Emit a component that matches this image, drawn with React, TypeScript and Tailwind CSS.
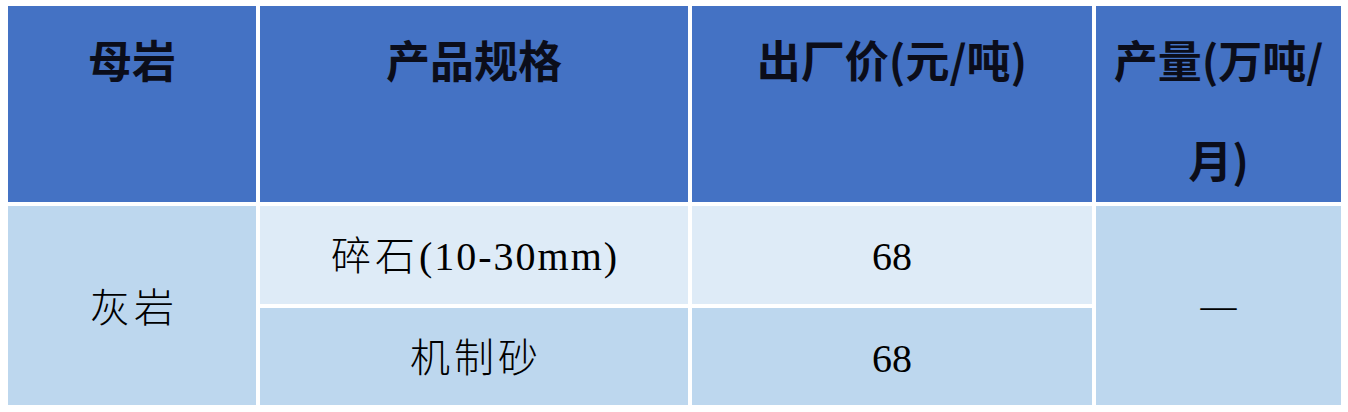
import React from 'react';

// Stone product price table: header row + two product rows
const headFont = "font-['Noto_Sans_CJK_SC','Noto_Sans',sans-serif] font-bold text-[44px] leading-[100px] text-[#0b0d1a]";
const bodyFont = "font-['Liberation_Serif','Noto_Sans_CJK_SC',serif] font-light text-[40px] text-black";

function HeadCell({ children }: { children: React.ReactNode }) {
  return (
    <div className={`bg-[#4472c4] text-center pt-[3px] ${headFont}`}>
      {children}
    </div>
  );
}

function BodyCell({ children, tone, span }: { children: React.ReactNode; tone: 'light' | 'pale'; span?: boolean }) {
  return (
    <div
      className={`flex items-center justify-center ${bodyFont} ${tone === 'pale' ? 'bg-[#deebf7]' : 'bg-[#bdd7ee]'} ${span ? 'row-span-2' : ''}`}
    >
      {children}
    </div>
  );
}

export default function App() {
  return (
    <div className="w-[1348px] h-[412px] bg-white pt-[6px] pl-[8px]">
      <div className="grid grid-cols-[248px_428px_400px_245px] grid-rows-[196px_98px_97px] gap-[4px]">
        <HeadCell>母岩</HeadCell>
        <HeadCell>产品规格</HeadCell>
        <HeadCell>出厂价(元/吨)</HeadCell>
        <HeadCell>
          产量(万吨/
          <br />
          月)
        </HeadCell>

        <BodyCell tone="light" span>
          <span className="tracking-[4px] pl-[4px] pt-[6px]">灰岩</span>
        </BodyCell>
        <BodyCell tone="pale">
          <span className="pt-[4px] pl-[2px]">
            <span className="tracking-[4px]">碎石</span>
            <span className="tracking-[2px]">(10-30mm)</span>
          </span>
        </BodyCell>
        <BodyCell tone="pale">
          <span className="pt-[4px]">68</span>
        </BodyCell>
        <BodyCell tone="light" span>
          <span className="font-['Liberation_Serif',serif] text-[36px] font-normal">—</span>
        </BodyCell>

        <BodyCell tone="light">
          <span className="tracking-[4px] pl-[4px] pt-[4px]">机制砂</span>
        </BodyCell>
        <BodyCell tone="light">
          <span className="pt-[4px]">68</span>
        </BodyCell>
      </div>
    </div>
  );
}
